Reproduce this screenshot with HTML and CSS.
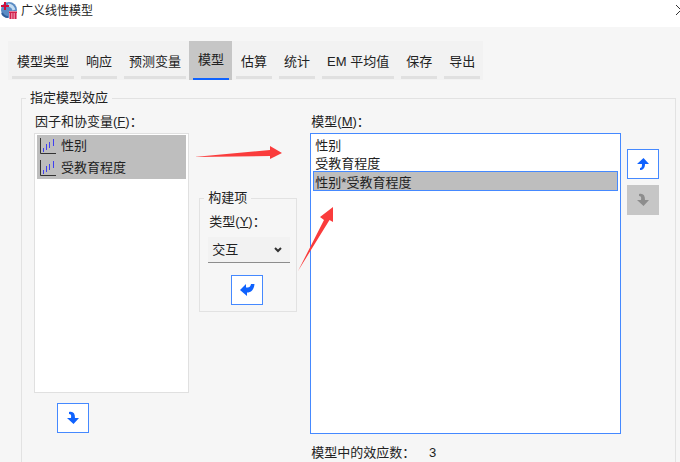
FILE: index.html
```html
<!DOCTYPE html>
<html lang="zh-CN">
<head>
  <meta charset="UTF-8" />
  <title>广义线性模型</title>
  <meta name="viewport" content="width=device-width, initial-scale=1" />
  <link rel="stylesheet" href="styles.css">
</head>
<body>

  <header class="titlebar">
    <svg class="logo" viewBox="0 0 18 18" aria-hidden="true">
      <circle cx="9" cy="9" r="8" fill="#5b8cc4" />
      <path d="M8 4a7 7 0 0 1 6 5" fill="none" stroke="#c4dcf2" stroke-width="3" />
      <path d="M2 12a7 7 0 0 0 6 4" fill="none" stroke="#2f5f9c" stroke-width="2" />
      <path d="M5 1v8M1 5h8" stroke="#d0103a" stroke-width="2" />
      <path d="M9 10h8v8H9z" fill="#e8809c" />
      <path d="M9 11.500h8M10.500 11v7M13 11v7M15.500 11v7" stroke="#d0204c" stroke-width="1" />
    </svg>
    <h1>广义线性模型</h1>
    <button class="close" type="button" aria-label="关闭">
      <svg viewBox="0 0 10 10"><path d="M0 0l10 10M10 0L0 10" stroke="#333" fill="none" /></svg>
    </button>
  </header>

  <nav class="tabs" role="tablist">
    <button class="tab" type="button" role="tab"><span>模型类型</span></button>
    <button class="tab" type="button" role="tab"><span>响应</span></button>
    <button class="tab" type="button" role="tab"><span>预测变量</span></button>
    <button class="tab active" type="button" role="tab" aria-selected="true"><span>模型</span></button>
    <button class="tab" type="button" role="tab"><span>估算</span></button>
    <button class="tab" type="button" role="tab"><span>统计</span></button>
    <button class="tab" type="button" role="tab"><span>EM 平均值</span></button>
    <button class="tab" type="button" role="tab"><span>保存</span></button>
    <button class="tab" type="button" role="tab"><span>导出</span></button>
  </nav>

  <fieldset class="effects">
    <legend>指定模型效应</legend>
    <div class="columns">

      <div class="factors">
        <span class="label" id="factores">因子和协变量(<u>F</u>)：</span>
        <ul class="list" role="listbox" aria-labelledby="factores" aria-multiselectable="true" tabindex="0">
          <li role="option" aria-selected="true">
            <svg viewBox="0 0 18 18" aria-hidden="true">
              <path d="M1.500 1v15.500H17" fill="none" stroke="#333" />
              <path d="M4.500 11v4M7.500 7v6M10.500 5v6M14.500 2v7" stroke="#4040f0" />
            </svg>
            性别
          </li>
          <li role="option" aria-selected="true">
            <svg viewBox="0 0 18 18" aria-hidden="true">
              <path d="M1.500 1v15.500H17" fill="none" stroke="#333" />
              <path d="M4.500 11v4M7.500 7v6M10.500 5v6M14.500 2v7" stroke="#4040f0" />
            </svg>
            受教育程度
          </li>
        </ul>
        <button class="arrow-btn down" type="button" aria-label="下移">
          <svg viewBox="0 0 14 14"><path d="M3 1C7 0 9 2 9 7h4L7.500 13 1 7h4C5.500 4 5 3 3 3z" /></svg>
        </button>
      </div>

      <fieldset class="build">
        <legend>构建项</legend>
        <label class="label" for="tipo">类型(<u>Y</u>)：</label>
        <div class="select-box">
          <select id="tipo">
            <option selected>交互</option>
            <option>主效应</option>
          </select>
          <svg viewBox="0 0 8 6" aria-hidden="true"><path d="M1 1l3 3 3-3" /></svg>
        </div>
        <button class="arrow-btn" type="button" aria-label="移除">
          <svg class="big" viewBox="0 0 16 14"><path d="M1 7L7 1v3.500c3 0 4.500-.5 5-3.500L15.500 1C15 7 12 9.500 8 9.500V13z" /></svg>
        </button>
      </fieldset>

      <div class="model">
        <label class="label" for="modelo">模型(<u>M</u>)：</label>
        <select class="model-list" id="modelo" size="15">
          <option>性别</option>
          <option>受教育程度</option>
          <option selected>性别*受教育程度</option>
        </select>
        <p class="count">模型中的效应数： <output>3</output></p>
      </div>

      <div class="order">
        <button class="arrow-btn" type="button" aria-label="上移">
          <svg viewBox="0 0 14 14"><path d="M7.500 1L13 7H9c0 4-2 6-5 6v-2c1.500 0 2-1 2-4H1z" /></svg>
        </button>
        <button class="arrow-btn" type="button" aria-label="下移" disabled>
          <svg viewBox="0 0 14 14"><path d="M3 1C7 0 9 2 9 7h4L7.500 13 1 7h4C5.500 4 5 3 3 3z" /></svg>
        </button>
      </div>

      <!-- flechas rojas sobre las listas -->
      <svg class="marks" viewBox="0 0 146 128" aria-hidden="true">
        <path d="M0 11L76 4V0L88 7 76 13V10z" />
        <path d="M104 125L130 74 126 71 139 61V76L135.500 74z" />
      </svg>
    </div>
  </fieldset>

</body>
</html>
```
FILE: styles.css
```css
* {
  box-sizing: border-box;
}
body {
  display: flex;
  flex-direction: column;
  height: 100vh;
  margin: 0;
  overflow: hidden;
  background: #f6f6f6;
  color: #222;
  font-family: "Liberation Sans", "Noto Sans CJK SC", sans-serif;
  font-size: 13px;
  line-height: 20px;
}
button, select {
  font: inherit;
  color: inherit;
}
fieldset {
  min-width: 0;
  margin: 0;
  border: 1px solid #e2e2e2;
}
legend {
  padding: 0 4px;
}

/* barra de título */
.titlebar {
  display: flex;
  flex: none;
  align-items: flex-start;
  height: 27px;
  overflow: hidden;
  background: #fff;
}
.logo {
  width: 18px;
  height: 18px;
  margin-top: 1px;
}
.titlebar h1 {
  flex: 1;
  margin: 1px 0 0 3px;
  font-size: 12px;
  font-weight: normal;
}
.close {
  flex: none;
  margin-right: -6px;
  padding: 5px 0;
  border: 0;
  background: none;
}
.close svg {
  display: block;
  width: 10px;
  height: 10px;
}

/* pestañas */
.tabs {
  display: flex;
  align-self: flex-start;
  margin: 14px 0 8px 8px;
  background: #f2f2f2;
}
.tab {
  height: 39px;
  padding: 0 3px 0 4px;
  border: 0;
  background: none;
  white-space: nowrap;
}
.tab span {
  display: block;
  height: 37px;
  padding: 10px 5px 0;
  border-bottom: 3px solid #e0e0e0;
}
.tab.active {
  background: #c6c6c6;
}
.tab.active span {
  height: 39px;
  padding-top: 9px;
  border-bottom: 2px solid #0f62fe;
}

.effects {
  flex: 1;
  margin: 0 4px 0 21px;
  padding: 4px 16px 0 12px;
  border-bottom: 0;
}
.effects > legend {
  margin-left: -8px;
}
.columns {
  position: relative;
  display: flex;
  align-items: flex-start;
}
.label {
  display: block;
  margin-bottom: 1px;
  padding-left: 1px;
}

.factors {
  flex: 1;
  min-width: 0;
}
.list {
  height: 260px;
  margin: 0;
  padding: 1px 2px;
  border: 1px solid #e0e0e0;
  background: #fff;
  list-style: none;
}
.list li {
  display: flex;
  align-items: center;
  gap: 4px;
  height: 22px;
  padding-left: 2px;
}
.list li[aria-selected="true"] {
  background: #bebebe;
}
.list svg {
  flex: none;
  width: 18px;
  height: 18px;
}

.arrow-btn {
  display: flex;
  align-items: center;
  justify-content: center;
  width: 32px;
  height: 30px;
  padding: 0;
  border: 1px solid #4589ff;
  background: #fff;
}
.arrow-btn svg {
  width: 14px;
  height: 14px;
  fill: #0f62fe;
}
.arrow-btn .big {
  width: 16px;
  height: 14px;
}
.arrow-btn:disabled {
  border-color: #c6c6c6;
  background: #c6c6c6;
}
.arrow-btn:disabled svg {
  fill: #8d8d8d;
}
.down {
  margin: 10px 0 0 23px;
}

/* construir términos */
.build {
  width: 98px;
  margin: 76px 13px 0 10px;
  padding: 4px 6px 6px 8px;
}
.build > legend {
  margin-left: -4px;
}
.select-box {
  position: relative;
  margin: 5px 0 12px;
}
.select-box select {
  appearance: none;
  width: 100%;
  height: 26px;
  padding: 0 4px;
  border: 0;
  border-bottom: 1px solid #8d8d8d;
  border-radius: 0;
  background: #f2f2f2;
}
.select-box svg {
  position: absolute;
  top: 10px;
  right: 8px;
  width: 8px;
  height: 6px;
  fill: none;
  stroke: #333;
  stroke-width: 2;
  pointer-events: none;
}
.build .arrow-btn {
  margin-left: 23px;
}

.model {
  flex: 2;
  min-width: 0;
}
.model-list {
  display: block;
  width: 100%;
  height: 301px;
  padding: 1px 2px;
  border: 1px solid #4589ff;
  border-radius: 0;
  background: #fff;
  outline: 0;
}
.model-list option {
  height: 18px;
  min-height: 0;
  padding: 0 2px;
}
.model-list option:checked {
  height: 20px;
  padding: 0 1px;
  border: 1px solid #4589ff;
  background: #bebebe linear-gradient(#bebebe, #bebebe);
  color: #222;
}
.count {
  margin: 9px 0 0 1px;
}
.count output {
  margin-left: 10px;
}

.order {
  display: flex;
  flex-direction: column;
  gap: 6px;
  margin: 37px 0 0 6px;
}

/* empieza en el borde derecho de la primera lista */
.marks {
  position: absolute;
  top: 34px;
  left: 160px;
  width: 146px;
  height: 128px;
  fill: #fa3c3c;
  pointer-events: none;
}
```
